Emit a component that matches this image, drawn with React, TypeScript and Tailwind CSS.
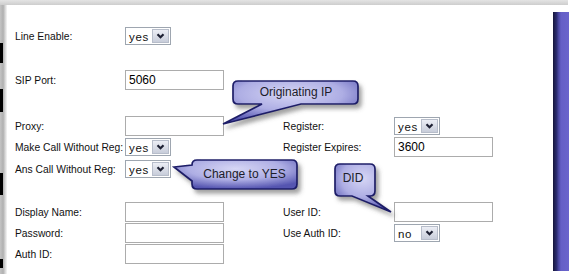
import React from "react";

const Chevron = () => (
  <svg width="9" height="6" viewBox="0 0 9 6">
    <path d="M1.5 1.2 L4.5 4.2 L7.5 1.2" stroke="#1d2033" strokeWidth="2.2" fill="none" />
  </svg>
);

const Select = ({ value }: { value: string }) => (
  <div className="flex h-[18px] w-[46px] border border-[#9ea6b0] bg-white">
    <span className="flex-1 pl-[3px] pt-px text-[11.5px] leading-[16px] tracking-[0.7px] text-[#111]">{value}</span>
    <span className="my-px mr-px flex w-[17px] items-center justify-center border border-[#b7bdca] bg-gradient-to-b from-[#eceef5] to-[#c8cdda]">
      <Chevron />
    </span>
  </div>
);

const Input = ({ value = "" }: { value?: string }) => (
  <div className="h-[20px] w-[99px] border border-[#acacac] bg-white pl-[3px] text-[12px] leading-[18px] text-black">
    {value}
  </div>
);

const Row = ({
  label,
  field,
  label2,
  field2,
  className = "",
}: {
  label: string;
  field: React.ReactNode;
  label2?: string;
  field2?: React.ReactNode;
  className?: string;
}) => (
  <div className={`flex h-[21px] items-center ${className}`}>
    <span className="w-[110px] pt-[2px]">{label}</span>
    <div className="w-[158px]">{field}</div>
    <span className="w-[111px] pt-[2px]">{label2}</span>
    <div>{field2}</div>
  </div>
);

const Callouts = () => (
  <svg className="pointer-events-none absolute left-0 top-0" width="579" height="274">
    <defs>
      <radialGradient id="bub" cx="50%" cy="30%" r="70%">
        <stop offset="0" stopColor="#d6d6f5" />
        <stop offset="0.55" stopColor="#aeaee4" />
        <stop offset="1" stopColor="#5454b0" />
      </radialGradient>
      <filter id="sh" x="-20%" y="-20%" width="150%" height="160%">
        <feDropShadow dx="3" dy="4" stdDeviation="2" floodColor="#555" floodOpacity="0.55" />
      </filter>
    </defs>
    <g fill="url(#bub)" stroke="#1e1e68" strokeWidth="1.7" filter="url(#sh)">
      <path d="M238 81 H353 Q358 81 358 86 V99 Q358 104 353 104 H301 L223 124 L262 104 H238 Q233 104 233 99 V86 Q233 81 238 81 Z" />
      <path d="M197 160 H292 Q297 160 297 165 V184 Q297 189 292 189 H197 Q192 189 192 184 V181 L174 167 L192 165 Q192 160 197 160 Z" />
      <path d="M340 164 H370 Q375 164 375 169 V191 Q375 196 370 196 H368 L391 212 L352 196 H340 Q335 196 335 191 V169 Q335 164 340 164 Z" />
    </g>
  </svg>
);

const Bubble = ({ text, className }: { text: string; className: string }) => (
  <div className={`absolute text-center text-[12px] leading-[14px] text-[#1c1c2a] ${className}`}>{text}</div>
);

export default function App() {
  return (
    <div className="relative flex h-[274px] w-[579px] flex-col overflow-hidden bg-white font-['Liberation_Sans',Arial,sans-serif] text-[10.3px] text-[#111]">
      <div className="h-[5px] w-[568px] shrink-0 bg-gradient-to-b from-[#e4e4e4] to-[#cdcdcd]" />

      <div className="flex flex-1">
        {/* left frame edge */}
        <div className="w-[7px] bg-[linear-gradient(to_right,#c4c4c4_0%,#b0b0b0_45%,#dedede_80%,#f6f6f6_100%)]">
          <div className="flex w-[3px] flex-col">
            <div className="h-[38px]" />
            <div className="h-[20px] bg-black" />
            <div className="h-[26px]" />
            <div className="h-[23px] bg-black" />
            <div className="h-[61px]" />
            <div className="h-[22px] bg-black" />
            <div className="h-[64px]" />
            <div className="h-[9px] bg-black" />
          </div>
        </div>

        {/* form */}
        <div className="w-[546px] pl-[8px]">
          <Row className="mt-[20px]" label="Line Enable:" field={<Select value="yes" />} />
          <Row className="mt-[23px]" label="SIP Port:" field={<Input value="5060" />} />
          <Row
            className="mt-[25px]"
            label="Proxy:"
            field={<Input />}
            label2="Register:"
            field2={<Select value="yes" />}
          />
          <Row
            label="Make Call Without Reg:"
            field={<Select value="yes" />}
            label2="Register Expires:"
            field2={<Input value="3600" />}
          />
          <Row className="mt-[1px]" label="Ans Call Without Reg:" field={<Select value="yes" />} />
          <Row
            className="mt-[22px]"
            label="Display Name:"
            field={<Input />}
            label2="User ID:"
            field2={<Input />}
          />
          <Row label="Password:" field={<Input />} label2="Use Auth ID:" field2={<Select value="no" />} />
          <Row label="Auth ID:" field={<Input />} />
        </div>

        {/* right purple bar */}
        <div className="mb-[3px] mt-[7px] w-[16px] bg-[linear-gradient(to_right,#15153a_0%,#2c2c70_22%,#4c4aa6_36%,#655fc6_50%,#6a64cc_100%)]" />
        <div className="w-[10px]" />
      </div>

      <Callouts />
      <Bubble text="Originating IP" className="left-[233px] top-[85px] w-[126px]" />
      <Bubble text="Change to YES" className="left-[192px] top-[167px] w-[105px]" />
      <Bubble text="DID" className="left-[333px] top-[171px] w-[40px]" />
    </div>
  );
}
